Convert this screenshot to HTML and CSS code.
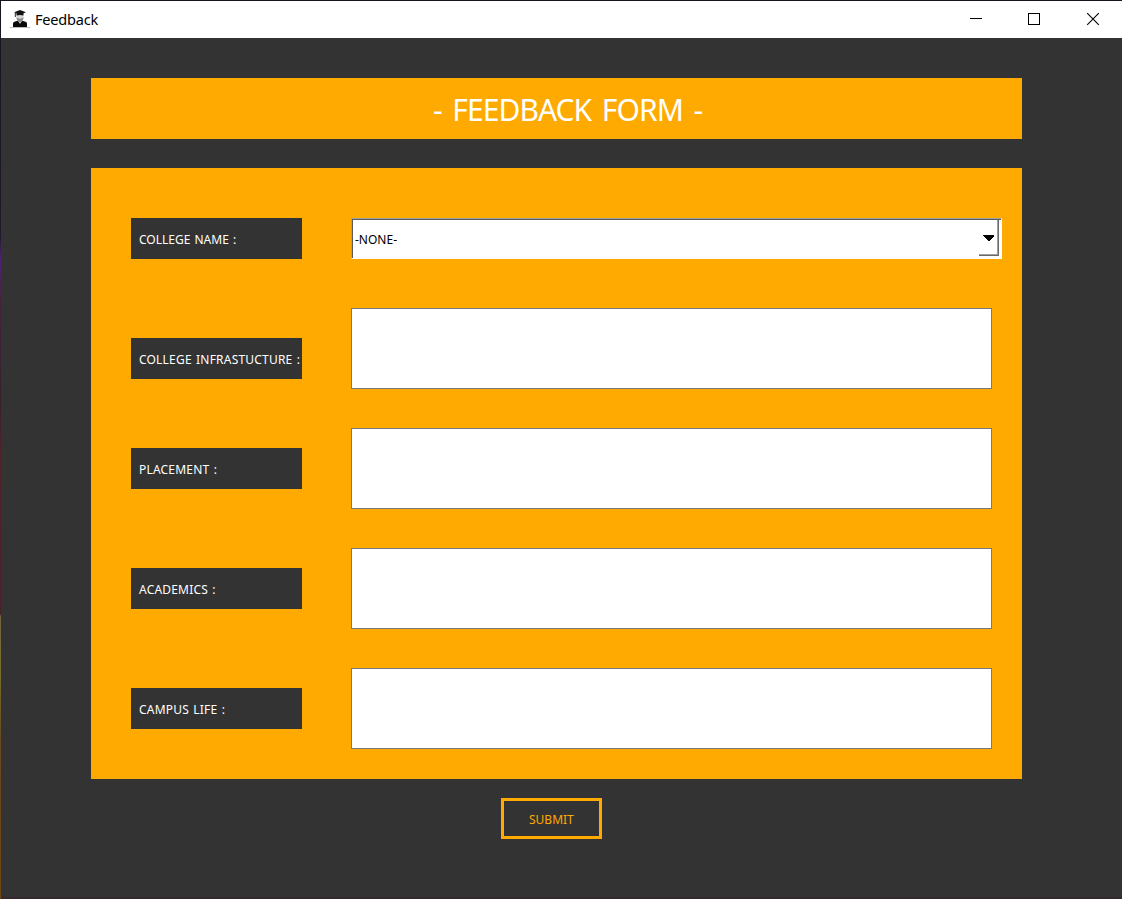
FILE: index.html
```html
<!DOCTYPE html>
<html lang="en">
<head>
<meta charset="utf-8">
<title>Feedback</title>
<link rel="stylesheet" href="styles.css">
</head>
<body>
<div class="window">
  <header class="titlebar">
    <svg class="app-icon" width="20" height="20" viewBox="0 0 20 20">
      <path d="M0 18.500H20" stroke="#bbb"/>
      <path d="M3 18v-3.500q0-1.500 2-2l3-.8 2 3 2-3 3 .8q2 .5 2 2V18z" fill="#080808"/>
      <path d="M6.700 5h6.600v4q-.5 3-3.300 4-2.800-1-3.300-4z" fill="#d4d4d4"/>
      <path d="M6.500 8q1 2 3.500 1.800T13.500 8q.3 4-3.500 5.200Q6.200 12 6.500 8z" fill="#888"/>
      <path d="M4 3.200 10 1l6 2.200L13.500 4.300V6.500q-3.500-1.200-7 0V4.300z" fill="#111"/>
      <path d="M5.300 4v4" stroke="#222"/>
    </svg>
    <span class="caption">Feedback</span>
    <div class="controls">
      <svg width="14" height="14" viewBox="0 0 14 14" shape-rendering="crispEdges"><path d="M1 6.500h12" stroke="#000"/></svg>
      <svg width="14" height="14" viewBox="0 0 14 14" shape-rendering="crispEdges"><path d="M1.500 1.500h11v11h-11z" fill="none" stroke="#000"/></svg>
      <svg width="14" height="14" viewBox="0 0 14 14"><path d="M1.200 1.200 12.800 12.800M12.800 1.200 1.200 12.800" stroke="#000" stroke-width="1.100"/></svg>
    </div>
  </header>
  <main class="content">
    <h1 class="banner"><span>- FEEDBACK FORM -</span></h1>
    <form class="panel">
      <div class="row row-college">
        <label class="tag"><span>COLLEGE NAME :</span></label>
        <div class="select"><span class="value">-NONE-</span>
          <span class="arrow"><svg width="11" height="6" viewBox="0 0 11 6" shape-rendering="crispEdges"><path d="M0 0H11V1L6 6H5L0 1z" fill="#000"/></svg></span>
        </div>
      </div>
      <div class="row row-infra">
        <label class="tag"><span>COLLEGE INFRASTUCTURE :</span></label>
        <div class="field"></div>
      </div>
      <div class="row">
        <label class="tag"><span>PLACEMENT :</span></label>
        <div class="field"></div>
      </div>
      <div class="row">
        <label class="tag"><span>ACADEMICS :</span></label>
        <div class="field"></div>
      </div>
      <div class="row">
        <label class="tag"><span>CAMPUS LIFE :</span></label>
        <div class="field"></div>
      </div>
    </form>
    <button class="submit" type="button"><span>SUBMIT</span></button>
  </main>
</div>
</body>
</html>
```
FILE: styles.css
```css
* { box-sizing: border-box; }
body { margin: 0; font-family: "Noto Sans", sans-serif; font-size: 12px; }
.window {
  width: 1122px; height: 899px; overflow: hidden;
  padding: 1px 0 0 1px;
  background: linear-gradient(#18131d 0, #21182a 235px, #51207a 260px, #45233d 300px, #35202c 400px, #552029 455px, #4b202b 614px, #756340 616px, #77702e 670px, #6b4920 740px, #704416 899px);
}
.titlebar { display: flex; align-items: center; height: 37px; padding: 0 22px 0 9px; background: #fff; }
.app-icon { flex: none; margin-bottom: 1px; }
.caption { margin: 0 0 2px 5px; font-size: 14.500px; line-height: 20px; letter-spacing: -.2px; color: #000; }
.controls { display: flex; margin: 0 0 2px auto; }
.controls svg { display: block; margin-left: 45px; }
.controls svg:nth-child(2) { margin-left: 44px; }
.content { height: 861px; padding: 40px 0 0 90px; background: #333; border-bottom: 2px solid #35292d; }
.banner {
  width: 931px; height: 61px; margin: 0 0 29px; padding: 2px 0 0 342px;
  display: flex; align-items: center;
  background: #fa0; color: #fff; font-size: 30px; font-weight: 400; white-space: pre;
  letter-spacing: -.95px; word-spacing: 3.800px;
}
.panel { width: 931px; height: 611px; padding: 50px 0 0 40px; background: #fa0; }
.row { display: flex; align-items: center; gap: 49px; height: 81px; margin-bottom: 39px; }
.row-college { height: 41px; margin-bottom: 49px; }
.tag {
  display: flex; align-items: center; flex: none;
  width: 171px; height: 41px; padding: 2px 0 0 8px;
  background: #333; color: #fff; white-space: nowrap;
  letter-spacing: .2px; word-spacing: 1px;
}
.row-college .tag { letter-spacing: 0; }
.row-infra .tag { margin-top: 20px; }
.field { width: 641px; height: 81px; background: #fff; border: 1px solid #7a7a7a; }
.select {
  display: flex; align-items: center; justify-content: space-between;
  width: 651px; height: 41px; padding: 0 2px 1px 3px; background: #fff; color: #000;
  border: 1px solid #fff; border-top-color: #a0a0a0; border-left-color: #a0a0a0;
  box-shadow: inset 1px 1px #5b5b5b;
}
.value { padding-top: 3px; }
.arrow {
  display: flex; align-items: center; justify-content: center;
  width: 20px; height: 36px; border: solid #696969; border-width: 0 1px 1px 0;
  box-shadow: inset -1px -1px #a0a0a0;
}
.submit {
  display: flex; align-items: center; width: 101px; height: 41px; margin: 19px 0 0 410px;
  padding: 2px 0 0 25px; border: 3px solid #fa0; background: #333; color: #fa0;
  font: 12px "Noto Sans", sans-serif;
}
```
